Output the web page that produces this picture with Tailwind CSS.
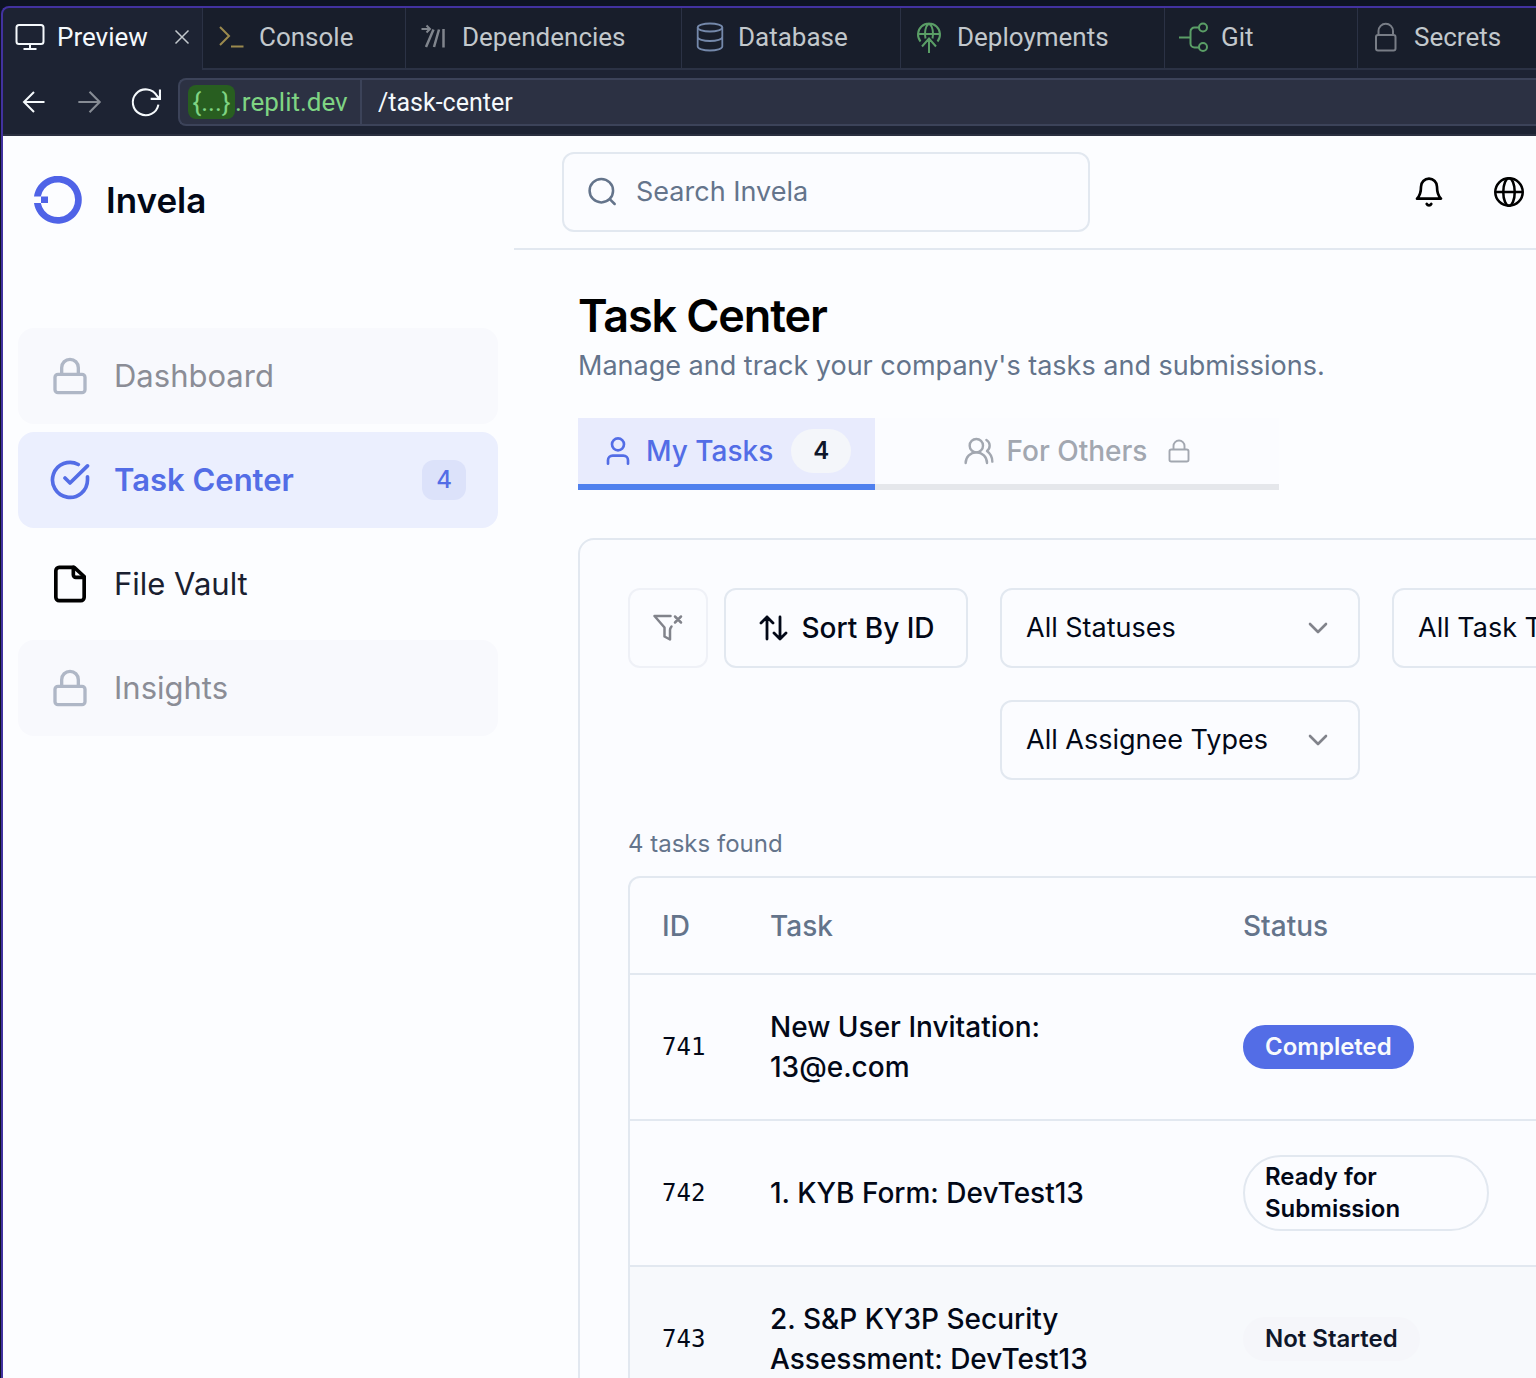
<!DOCTYPE html>
<html lang="en">
<head>
<meta charset="utf-8">
<title>Invela Task Center</title>
<script src="https://cdn.jsdelivr.net/npm/@tailwindcss/browser@4"></script>
</head>
<body class="bg-[#0e1423]">
<div class="flex h-screen flex-col overflow-hidden pt-1.5 pl-px font-['Inter',sans-serif] text-[#020817]">
<div class="flex min-h-0 flex-1 flex-col overflow-hidden rounded-tl-lg border-t-2 border-l-2 border-[#4232a0] bg-[#1d2333]">

  <!-- Workspace tabs -->
  <nav aria-label="Workspace tabs" class="flex h-[62px] shrink-0 font-['Roboto',sans-serif] text-[26px] text-[#c2c8cc]">
    <div class="flex w-[199px] shrink-0 items-center pb-1 pl-3 text-[#f5f9fc]">
      <a href="#" class="flex items-center gap-3">
        <svg class="size-[30px]" viewBox="0 0 30 30" fill="none" stroke="currentColor" stroke-width="2"><rect x="1.5" y="3" width="27" height="19" rx="2.5"/><path d="M15 22v5M8.500 27h13"/></svg>
        <span>Preview</span>
      </a>
      <button aria-label="Close Preview" class="ml-[26px] text-[#c2c8cc]"><svg class="size-4" viewBox="0 0 16 16" fill="none" stroke="currentColor" stroke-width="1.500"><path d="M1.500 1.500l13 13M14.500 1.500l-13 13"/></svg></button>
    </div>
    <a href="#" class="flex w-[203px] shrink-0 items-center gap-3 border-b-2 border-l border-[#2b3245] bg-[#181e2b] pb-0.5 pl-[14px]">
      <svg class="size-[30px] text-[#9b8a4e]" viewBox="0 0 30 30" fill="none" stroke="currentColor" stroke-width="2"><path d="M3 5l9 9-9 9M14 24.500h12.500"/></svg><span>Console</span>
    </a>
    <a href="#" class="flex w-[276px] shrink-0 items-center gap-3 border-b-2 border-l border-[#2b3245] bg-[#181e2b] pb-0.5 pl-[14px]">
      <svg class="size-[30px] text-[#80858d]" viewBox="0 0 30 30" fill="none" stroke="currentColor" stroke-width="2"><path d="M1.500 7h8M6.500 3.500L10 7l-3.500 3.500"/><path stroke-width="2.500" d="M13.500 7.500L6 25M19 7.500L14 25M23.500 7v18.500"/></svg><span>Dependencies</span>
    </a>
    <a href="#" class="flex w-[219px] shrink-0 items-center gap-3 border-b-2 border-l border-[#2b3245] bg-[#181e2b] pb-0.5 pl-[14px]">
      <svg class="size-[30px] text-[#7488aa]" viewBox="0 0 30 30" fill="none" stroke="currentColor" stroke-width="1.800"><ellipse cx="14" cy="5.500" rx="12.300" ry="4"/><path d="M1.700 5.500v19c0 2.200 5.500 4 12.300 4s12.300-1.800 12.300-4v-19M1.700 15c0 2.200 5.500 4 12.300 4s12.300-1.800 12.300-4"/></svg><span>Database</span>
    </a>
    <a href="#" class="flex w-[264px] shrink-0 items-center gap-3 border-b-2 border-l border-[#2b3245] bg-[#181e2b] pb-0.5 pl-[14px]">
      <svg class="size-[30px] overflow-visible text-[#5a9e66]" viewBox="0 0 30 30" fill="none" stroke="currentColor" stroke-width="2"><path d="M5.500 19.500A11 11 0 1 1 22.500 19.500M3 12h22M10.500 16.500C9 11 10.500 4 14 1.500C17.500 4 19 11 17.500 16.500M14 31V17M7 24.500l7-8 7 8"/></svg><span>Deployments</span>
    </a>
    <a href="#" class="flex w-[193px] shrink-0 items-center gap-3 border-b-2 border-l border-[#2b3245] bg-[#181e2b] pb-0.5 pl-[14px]">
      <svg class="size-[30px] text-[#5a9e66]" viewBox="0 0 30 30" fill="none" stroke="currentColor" stroke-width="2"><path d="M0 15.500h11.500M20 5.500h-4.500a4 4 0 0 0-4 4v12a4 4 0 0 0 4 4H20"/><circle cx="24" cy="5.500" r="4"/><circle cx="24" cy="25" r="4"/></svg><span>Git</span>
    </a>
    <a href="#" class="flex min-w-[193px] flex-1 items-center gap-3 border-b-2 border-l border-[#2b3245] bg-[#181e2b] pb-0.5 pl-[14px]">
      <svg class="size-[30px] text-[#787d86]" viewBox="0 0 30 30" fill="none" stroke="currentColor" stroke-width="2"><rect x="4" y="13" width="19.500" height="15.500" rx="2"/><path d="M6.500 13V9a7.200 7.200 0 0 1 14.500 0v4"/></svg><span>Secrets</span>
    </a>
  </nav>

  <!-- Address bar -->
  <div class="flex h-[66px] shrink-0 items-center border-b-2 border-[#2b3040] pl-4 font-['Roboto',sans-serif] text-[26px]">
    <button aria-label="Back" class="mr-6 text-[#f5f9fc]"><svg class="size-[30px]" viewBox="0 0 30 30" fill="none" stroke="currentColor" stroke-width="2"><path d="M25.500 15H5M15 5L5 15l10 10"/></svg></button>
    <button aria-label="Forward" class="mr-6 text-[#868b94]"><svg class="size-[32px]" viewBox="0 0 30 30" fill="none" stroke="currentColor" stroke-width="2"><path d="M5 15h20M15.500 5.500L25 15l-9.500 9.500"/></svg></button>
    <button aria-label="Reload" class="mr-4 text-[#f5f9fc]"><svg class="size-[33px]" viewBox="0 0 32 32" fill="none" stroke="currentColor" stroke-width="2"><path d="M28.500 18A12.500 12.500 0 1 1 27 9.500L29.500 12M30 3.500V12.500H21"/></svg></button>
    <div class="flex h-12 min-w-0 flex-1 items-center rounded-l-lg border-2 border-r-0 border-[#3c4359] bg-[#2c3143]">
      <div class="flex h-full w-[182px] shrink-0 items-center border-r-2 border-[#3c4359] pl-2 text-[#7fd483]"><span class="flex h-[34px] w-[47px] items-center justify-center rounded-lg bg-[#285e20]">{...}</span><span>.replit.dev</span></div>
      <input aria-label="Path" value="/task-center" class="h-full min-w-0 flex-1 bg-transparent pl-4 text-[25px] text-[#f5f9fc] outline-none">
    </div>
  </div>

  <div class="flex min-h-0 flex-1 bg-[#fcfdff]">
    <!-- Sidebar -->
    <aside class="w-[511px] shrink-0 pr-4 pl-[15px]">
      <div class="flex items-center gap-6 pt-10 pl-4">
        <svg class="size-12" viewBox="0 0 48 48"><path fill="#4f63e7" d="M0 20.500A24 24 0 1 1 0 27H6.800A17.300 17.300 0 1 0 6.800 20.500ZM7 20.500h7V27H7z"/></svg>
        <span class="text-[35px] leading-12 font-semibold">Invela</span>
      </div>
      <nav aria-label="Main" class="mt-[104px] flex flex-col gap-2 text-[31px]">
        <a href="#" aria-disabled="true" class="flex h-24 items-center gap-6 rounded-2xl bg-[#f8f9fd] px-8 text-[#8b8d96]">
          <svg class="size-10 text-[#afb7c6]" viewBox="0 0 24 24" fill="none" stroke="currentColor" stroke-width="2"><rect x="3" y="11" width="18" height="11" rx="1.800"/><path d="M7 11V7a5 5 0 0 1 10 0v4"/></svg>Dashboard</a>
        <a href="#" aria-current="page" class="flex h-24 items-center gap-6 rounded-2xl bg-[#ebeffe] px-8 font-semibold text-[#536de6]">
          <svg class="size-10" viewBox="0 0 24 24" fill="none" stroke="currentColor" stroke-width="2.200" stroke-linecap="round" stroke-linejoin="round"><path d="M22.500 10.100V12a10.500 10.500 0 1 1-5.500-9.300"/><path d="M22.500 3.500L12 13.800l-3-3"/></svg>Task Center
          <span class="ml-auto flex h-10 w-11 items-center justify-center rounded-xl bg-[#dce2fa] text-2xl font-medium">4</span></a>
        <a href="#" class="flex h-24 items-center gap-6 rounded-2xl px-8 text-[#1a2030]">
          <svg class="size-10 text-black" viewBox="0 0 24 24" fill="none" stroke="currentColor" stroke-width="2.200" stroke-linecap="round" stroke-linejoin="round"><path d="M14.500 2H5.500a2 2 0 0 0-2 2v16a2 2 0 0 0 2 2h13a2 2 0 0 0 2-2V7.500z"/><path d="M14 2v4.500a1.500 1.500 0 0 0 1.500 1.500h5"/></svg>File Vault</a>
        <a href="#" aria-disabled="true" class="flex h-24 items-center gap-6 rounded-2xl bg-[#f8f9fd] px-8 text-[#8b8d96]">
          <svg class="size-10 text-[#afb7c6]" viewBox="0 0 24 24" fill="none" stroke="currentColor" stroke-width="2"><rect x="3" y="11" width="18" height="11" rx="1.800"/><path d="M7 11V7a5 5 0 0 1 10 0v4"/></svg>Insights</a>
      </nav>
    </aside>

    <div class="min-w-0 flex-1 overflow-hidden">
      <header class="flex h-[114px] items-center border-b-2 border-[#e2e8f0] pl-12">
        <label class="flex h-20 w-[528px] shrink-0 items-center gap-[18px] rounded-xl border-2 border-[#e2e8f0] bg-[#fbfcff] px-[22px] text-[#64748b]">
          <svg class="size-8 shrink-0" viewBox="0 0 24 24" fill="none" stroke="currentColor" stroke-width="1.900" stroke-linecap="round"><circle cx="11.500" cy="11" r="8.800"/><path d="M18 17.500L21.500 21"/></svg>
          <input type="search" placeholder="Search Invela" aria-label="Search Invela" class="min-w-0 flex-1 bg-transparent text-[27px] outline-none placeholder:text-[#64748b]">
        </label>
        <button aria-label="Notifications" class="ml-[299px] flex size-20 shrink-0 items-center justify-center text-black"><svg class="size-8" viewBox="0 0 24 24" fill="none" stroke="currentColor" stroke-width="2" stroke-linecap="round" stroke-linejoin="round"><path d="M6 8a6 6 0 0 1 12 0c0 5 1.500 7.500 3 9H3c1.500-1.500 3-4 3-9M10.300 21a1.940 1.940 0 0 0 3.400 0"/></svg></button>
        <button aria-label="Language" class="flex size-20 shrink-0 items-center justify-center text-black"><svg class="size-8" viewBox="0 0 24 24" fill="none" stroke="currentColor" stroke-width="1.900"><circle cx="12" cy="12" r="10.300"/><ellipse cx="12" cy="12" rx="4.300" ry="10.300"/><path d="M1.700 12h20.600"/></svg></button>
      </header>

      <main class="pt-[42px] pl-16">
        <h1 class="text-[45px] leading-12 font-semibold tracking-tight text-black">Task Center</h1>
        <p class="mt-1 text-[27px] leading-[44px] whitespace-nowrap text-[#64748b]">Manage and track your company's tasks and submissions.</p>

        <div role="tablist" class="mt-[30px] flex h-[72px] text-[28px] font-medium">
          <button role="tab" aria-selected="true" class="flex w-[297px] items-center border-b-6 border-[#4f80ee] bg-[#e8ebfd] pl-6 text-[#536de6]">
            <svg class="mr-3 size-8" viewBox="0 0 24 24" fill="none" stroke="currentColor" stroke-width="2" stroke-linecap="round"><circle cx="12" cy="7" r="4.500"/><path d="M4.500 21.500V19a3.500 3.500 0 0 1 3.500-3.500h8a3.500 3.500 0 0 1 3.500 3.500v2.500"/></svg>
            <span>My Tasks</span><span class="ml-[18px] flex h-11 w-15 items-center justify-center rounded-full bg-[#f4f6fa] text-2xl font-semibold text-[#0f172a]">4</span>
          </button>
          <button role="tab" aria-selected="false" disabled class="flex w-[404px] items-center justify-center border-b-6 border-[#e5e7eb] bg-[#fbfcff] text-[#a2a7b0]">
            <svg class="mr-3 size-8" viewBox="0 0 24 24" fill="none" stroke="currentColor" stroke-width="1.800" stroke-linecap="round" stroke-linejoin="round"><circle cx="10" cy="8" r="5"/><path d="M18 21a8 8 0 0 0-16 0M22 20c0-3.370-2-6.500-4-8a5 5 0 0 0-.450-8.300"/></svg>
            <span>For Others</span><svg class="ml-5 size-6" viewBox="0 0 24 24" fill="none" stroke="currentColor" stroke-width="1.900"><rect x="2.500" y="10.500" width="19" height="12" rx="1.800"/><path d="M6.500 10.500V7a5.500 5.500 0 0 1 11 0v3.500"/></svg>
          </button>
        </div>

        <section class="mt-12 min-w-[1240px] rounded-2xl border-2 border-[#e2e8f0] bg-[#fbfcff] p-12">
          <div class="flex items-start">
            <button aria-label="Clear filters" disabled class="flex size-20 shrink-0 items-center justify-center rounded-xl border-2 border-[#eff1f7] text-[#81838b]"><svg class="size-8" viewBox="0 0 32 32" fill="none" stroke="currentColor" stroke-width="2.500" stroke-linecap="round" stroke-linejoin="round"><path d="M18.500 4H2.500L12.500 15.500v9l5.500 3V18c0-1.500.300-2 1.500-3.500M23 4.500l6 6M29 4.500l-6 6"/></svg></button>
            <button class="ml-4 flex h-20 w-[244px] shrink-0 items-center justify-center gap-3 rounded-xl border-2 border-[#e2e8f0] text-[28px] font-medium"><svg class="size-8" viewBox="0 0 32 32" fill="none" stroke="currentColor" stroke-width="2.800" stroke-linecap="round" stroke-linejoin="round"><path d="M10 27V5M4 11l6-6 6 6M23 5v22M17 21l6 6 6-6"/></svg>Sort By ID</button>
            <div class="ml-8 grid grid-cols-[360px_360px] gap-8 text-[27px]">
              <div class="grid items-center"><select aria-label="Status" class="col-start-1 row-start-1 h-20 appearance-none rounded-xl border-2 border-[#e2e8f0] px-6"><option>All Statuses</option></select><svg class="pointer-events-none col-start-1 row-start-1 mr-[26px] size-8 justify-self-end text-[#81838b]" viewBox="0 0 32 32" fill="none" stroke="currentColor" stroke-width="2.600" stroke-linecap="round" stroke-linejoin="round"><path d="M8 12l8 8 8-8"/></svg></div>
              <div class="grid items-center"><select aria-label="Task type" class="col-start-1 row-start-1 h-20 appearance-none rounded-xl border-2 border-[#e2e8f0] px-6"><option>All Task Types</option></select><svg class="pointer-events-none col-start-1 row-start-1 mr-[26px] size-8 justify-self-end text-[#81838b]" viewBox="0 0 32 32" fill="none" stroke="currentColor" stroke-width="2.600" stroke-linecap="round" stroke-linejoin="round"><path d="M8 12l8 8 8-8"/></svg></div>
              <div class="grid items-center"><select aria-label="Assignee type" class="col-start-1 row-start-1 h-20 appearance-none rounded-xl border-2 border-[#e2e8f0] px-6"><option>All Assignee Types</option></select><svg class="pointer-events-none col-start-1 row-start-1 mr-[26px] size-8 justify-self-end text-[#81838b]" viewBox="0 0 32 32" fill="none" stroke="currentColor" stroke-width="2.600" stroke-linecap="round" stroke-linejoin="round"><path d="M8 12l8 8 8-8"/></svg></div>
            </div>
          </div>

          <p class="mt-12 text-2xl text-[#64748b]">4 tasks found</p>
          <div class="mt-4 overflow-hidden rounded-xl border-2 border-[#e2e8f0]">
            <table class="w-full table-fixed text-left text-[28px] leading-10 font-medium">
              <colgroup><col class="w-[108px]"><col class="w-[473px]"><col class="w-[310px]"><col></colgroup>
              <thead><tr class="h-24 border-b-2 border-[#e2e8f0] text-[#64748b]"><th class="px-8 font-medium">ID</th><th class="px-8 font-medium">Task</th><th class="px-8 font-medium">Status</th><th></th></tr></thead>
              <tbody>
                <tr class="h-[146px] border-b-2 border-[#e2e8f0]"><td class="px-8 font-['DejaVu_Sans_Mono',monospace] text-2xl font-normal">741</td><td class="px-8">New User Invitation:<br>13@e.com</td><td class="px-8"><div class="flex"><span class="rounded-full border-2 border-[#536de6] bg-[#536de6] px-5 py-1 text-2xl font-semibold text-[#f8fafc]">Completed</span></div></td><td></td></tr>
                <tr class="h-[146px] border-b-2 border-[#e2e8f0]"><td class="px-8 font-['DejaVu_Sans_Mono',monospace] text-2xl font-normal">742</td><td class="px-8">1. KYB Form: DevTest13</td><td class="px-8"><div class="flex"><span class="w-full rounded-full border-2 border-[#e2e8f0] px-5 py-1 text-2xl font-semibold">Ready for<br>Submission</span></div></td><td></td></tr>
                <tr class="h-[146px] border-b-2 border-[#e2e8f0] bg-[#f7f9fc]"><td class="px-8 font-['DejaVu_Sans_Mono',monospace] text-2xl font-normal">743</td><td class="px-8">2. S&amp;P KY3P Security<br>Assessment: DevTest13</td><td class="px-8"><div class="flex"><span class="rounded-full border-2 border-[#f5f6fa] bg-[#f5f6fa] px-5 py-1 text-2xl font-semibold text-[#0f172a]">Not Started</span></div></td><td></td></tr>
              </tbody>
            </table>
          </div>
        </section>
      </main>
    </div>
  </div>
</div>
</div>
</body>
</html>
